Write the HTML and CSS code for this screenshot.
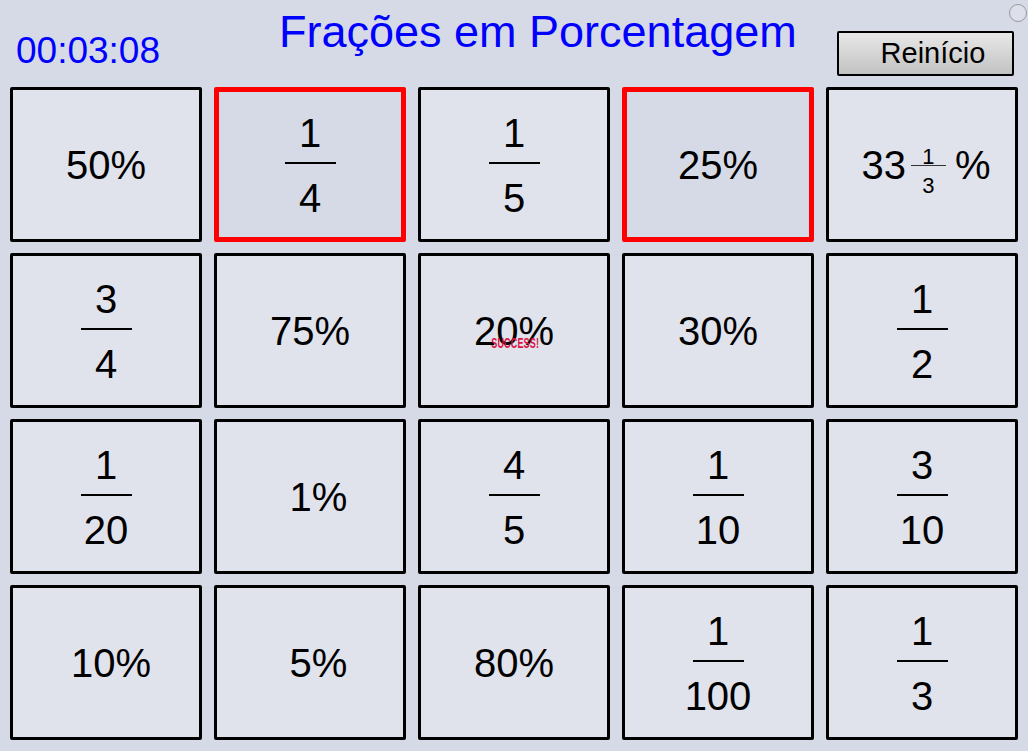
FILE: index.html
```html
<!DOCTYPE html>
<html lang="pt">
<head>
<meta charset="utf-8">
<title>Frações em Porcentagem</title>
<link rel="stylesheet" href="styles.css">
</head>
<body>
<div class="app">
  <header class="top">
    <div class="timer">00:03:08</div>
    <h1 class="title">Frações em Porcentagem</h1>
    <div class="actions"><button class="reset">Reinício</button></div>
  </header>
  <span class="dot"></span>
  <main class="board">
    <div class="card"><span class="pct">50%</span></div>
    <div class="card sel"><span class="frac"><span class="num">1</span><span class="bar"></span><span class="den">4</span></span></div>
    <div class="card"><span class="frac"><span class="num">1</span><span class="bar"></span><span class="den">5</span></span></div>
    <div class="card sel"><span class="pct">25%</span></div>
    <div class="card mixed"><span class="pct">33</span><span class="mini"><span class="mnum">1</span><span class="mbar"></span><span class="mden">3</span></span><span class="pct">%</span></div>

    <div class="card"><span class="frac"><span class="num">3</span><span class="bar"></span><span class="den">4</span></span></div>
    <div class="card"><span class="pct">75%</span></div>
    <div class="card"><span class="pct">20%</span><span class="success">SUCCESS!</span></div>
    <div class="card"><span class="pct">30%</span></div>
    <div class="card"><span class="frac"><span class="num">1</span><span class="bar"></span><span class="den">2</span></span></div>

    <div class="card"><span class="frac"><span class="num">1</span><span class="bar"></span><span class="den">20</span></span></div>
    <div class="card shift-l"><span class="pct">1%</span></div>
    <div class="card"><span class="frac"><span class="num">4</span><span class="bar"></span><span class="den">5</span></span></div>
    <div class="card"><span class="frac"><span class="num">1</span><span class="bar"></span><span class="den">10</span></span></div>
    <div class="card"><span class="frac"><span class="num">3</span><span class="bar"></span><span class="den">10</span></span></div>

    <div class="card shift-s"><span class="pct">10%</span></div>
    <div class="card shift-l"><span class="pct">5%</span></div>
    <div class="card"><span class="pct">80%</span></div>
    <div class="card"><span class="frac"><span class="num">1</span><span class="bar"></span><span class="den">100</span></span></div>
    <div class="card"><span class="frac"><span class="num">1</span><span class="bar"></span><span class="den">3</span></span></div>
  </main>
</div>
</body>
</html>
```

FILE: styles.css
```css
* { box-sizing: border-box; }

html, body {
  margin: 0;
  padding: 0;
}

body {
  width: 1028px;
  height: 751px;
  overflow: hidden;
  background: #d6dae6;
  font-family: "Liberation Sans", Arial, sans-serif;
  color: #000;
}

.app {
  position: relative;
  width: 1028px;
  height: 751px;
}

.top {
  display: grid;
  grid-template-columns: 279px auto 1fr;
  height: 87px;
  align-items: start;
}

.timer {
  padding-left: 16px;
  margin-top: 32px;
  font-size: 37px;
  line-height: 1;
  color: #0000ff;
}

.title {
  margin: 9px 0 0 0;
  font-size: 45px;
  line-height: 1;
  font-weight: normal;
  color: #0000ff;
}

.actions {
  display: flex;
  justify-content: flex-end;
  padding-right: 14px;
  padding-top: 31px;
}

.reset {
  width: 177px;
  height: 45px;
  border: 2px solid #000;
  border-radius: 2px;
  background: linear-gradient(#e8e8e8, #c2c2c2);
  font-family: "Liberation Sans", Arial, sans-serif;
  font-size: 29px;
  line-height: 1;
  color: #000;
  padding: 0 0 0 15px;
  margin: 0;
}

.dot {
  position: absolute;
  left: 1009px;
  top: 4px;
  width: 18px;
  height: 18px;
  border-radius: 50%;
  border: 1px solid #9a9a9a;
  background: #dde0ea;
}

.board {
  display: grid;
  grid-template-columns: repeat(5, 192px);
  grid-template-rows: repeat(4, 155px);
  column-gap: 12px;
  row-gap: 11px;
  padding-left: 10px;
}

.card {
  position: relative;
  display: flex;
  align-items: center;
  justify-content: center;
  background: #e0e2ec;
  border: 3px solid #000;
  border-radius: 2px;
}

.card.sel {
  border: 5px solid #ff0000;
  background: #d6dae6;
}

.card.shift-l { padding-left: 17px; }
.card.shift-s { padding-left: 10px; }
.card.mixed { padding-left: 8px; }

.pct {
  font-size: 40px;
  line-height: 40px;
}

.frac {
  display: flex;
  flex-direction: column;
  align-items: center;
  font-size: 40px;
  padding-top: 1px;
}

.num, .den {
  line-height: 44px;
}

.num { margin-bottom: 7px; }
.den { margin-top: 12px; }

.bar {
  display: block;
  width: 51px;
  height: 2px;
  background: #000;
}

.mini {
  display: flex;
  flex-direction: column;
  align-items: center;
  font-size: 22px;
  margin: 0 9px 0 5px;
  padding-top: 13px;
}

.mnum, .mden { line-height: 20px; }
.mnum { margin-bottom: -2px; }
.mden { margin-top: 10px; }

.mbar {
  display: block;
  width: 35px;
  height: 1px;
  background: #333;
}

.success {
  position: absolute;
  left: 0;
  right: 0;
  top: 79px;
  padding-left: 4px;
  text-align: center;
  font-family: "Liberation Sans", Arial, sans-serif;
  font-weight: bold;
  font-size: 15px;
  line-height: 15px;
  letter-spacing: 0.3px;
  color: #dc1446;
  transform: scaleX(0.6);
}
```
